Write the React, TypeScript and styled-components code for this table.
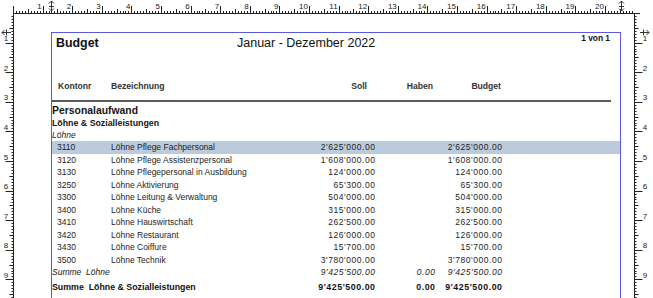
import React from "react";
import styled, { createGlobalStyle } from "styled-components";

const GlobalStyle = createGlobalStyle`
  html, body {
    margin: 0;
    padding: 0;
    background: #ffffff;
  }
  body {
    font-family: "Liberation Sans", Arial, sans-serif;
    color: #1e1e1e;
  }
`;

interface BudgetRow {
  konto: string;
  name: string;
  soll: string;
  budget: string;
}

const rows: BudgetRow[] = [
  { konto: "3110", name: "Löhne Pflege Fachpersonal", soll: "2'625'000.00", budget: "2'625'000.00" },
  { konto: "3120", name: "Löhne Pflege Assistenzpersonal", soll: "1'608'000.00", budget: "1'608'000.00" },
  { konto: "3130", name: "Löhne Pflegepersonal in Ausbildung", soll: "124'000.00", budget: "124'000.00" },
  { konto: "3250", name: "Löhne Aktivierung", soll: "65'300.00", budget: "65'300.00" },
  { konto: "3300", name: "Löhne Leitung & Verwaltung", soll: "504'000.00", budget: "504'000.00" },
  { konto: "3400", name: "Löhne Küche", soll: "315'000.00", budget: "315'000.00" },
  { konto: "3410", name: "Löhne Hauswirtschaft", soll: "262'500.00", budget: "262'500.00" },
  { konto: "3420", name: "Löhne Restaurant", soll: "126'000.00", budget: "126'000.00" },
  { konto: "3430", name: "Löhne Coiffure", soll: "15'700.00", budget: "15'700.00" },
  { konto: "3500", name: "Löhne Technik", soll: "3'780'000.00", budget: "3'780'000.00" },
];

const CM = 29.6;
const MM = CM / 10;

const Frame = styled.div`
  width: 653px;
  height: 298px;
  overflow: hidden;
  display: grid;
  grid-template-columns: 14px 620px 19px;
  grid-template-rows: 14px 284px;
  background: #fff;
`;

const TopRulerCell = styled.div`
  grid-column: 1 / -1;
`;

const Page = styled.div`
  background: #fff;
  padding: 18px 0 0 37px;
  overflow: hidden;
`;

const MarginBox = styled.div`
  width: 568px;
  height: 300px;
  border: 1px solid #5a5ae0;
  border-bottom: none;
`;

const HeaderRow = styled.div`
  height: 44px;
  display: grid;
  grid-template-columns: 185px auto 1fr;
  align-items: start;
`;

const Title = styled.div`
  margin: 2px 0 0 4px;
  font-size: 12.4px;
  line-height: 16px;
  font-weight: bold;
  color: #111;
`;

const Period = styled.div`
  margin-top: 2px;
  font-size: 12.5px;
  line-height: 16px;
  color: #111;
`;

const PageNo = styled.div`
  justify-self: end;
  margin: 0 10px 0 0;
  font-size: 8.4px;
  line-height: 11px;
  font-weight: bold;
  color: #111;
`;

const Cols = styled.div`
  display: grid;
  grid-template-columns: 59px 184px 80px 60px 67px 1fr;
`;

const ColumnHeads = styled(Cols)`
  margin-top: 3px;
  height: 12px;
  font-size: 8.6px;
  line-height: 12px;
  font-weight: bold;
  color: #333;
`;

const Head = styled.div<{ $right?: boolean; $pad?: number }>`
  text-align: ${(p) => (p.$right ? "right" : "left")};
  padding-left: ${(p) => (p.$right ? 0 : p.$pad ?? 0)}px;
  padding-right: ${(p) => (p.$right ? p.$pad ?? 0 : 0)}px;
`;

const Rule = styled.div`
  margin: 8px 9px 0 0;
  height: 2px;
  background: #5b5b5b;
`;

const GroupTitle = styled.div`
  margin-top: 2px;
  font-size: 10.4px;
  line-height: 13px;
  font-weight: bold;
  color: #151515;
`;

const SubTitle = styled.div`
  font-size: 8.8px;
  line-height: 12px;
  font-weight: bold;
  color: #151515;
`;

const Section = styled.div`
  font-size: 8.5px;
  line-height: 12px;
  font-style: italic;
  color: #222;
`;

const Row = styled(Cols)<{ $selected?: boolean }>`
  height: 12.5px;
  font-size: 8.5px;
  line-height: 12.5px;
  color: #1e1e1e;
  background: ${(p) => (p.$selected ? "#bccbdc" : "transparent")};
`;

const Cell = styled.div<{ $pad?: number }>`
  white-space: nowrap;
  padding-left: ${(p) => p.$pad ?? 0}px;
`;

// amounts are drawn a little wider in the report renderer
const Amount = styled.div`
  white-space: nowrap;
  text-align: right;
  letter-spacing: 0.55px;
  margin-right: -0.55px;
`;

const SumRow = styled(Cols)<{ $total?: boolean }>`
  height: 12.5px;
  margin-top: ${(p) => (p.$total ? 2.5 : 0)}px;
  font-size: ${(p) => (p.$total ? 8.8 : 8.5)}px;
  line-height: 12.5px;
  font-style: ${(p) => (p.$total ? "normal" : "italic")};
  font-weight: ${(p) => (p.$total ? "bold" : "normal")};
  color: ${(p) => (p.$total ? "#111" : "#222")};
`;

const SumLabel = styled.div`
  grid-column: 1 / 3;
  white-space: nowrap;
`;

const tickLen = (i: number, long: number) => (i % 10 === 0 ? long : i % 5 === 0 ? 4 : 2);

const TopRuler: React.FC = () => {
  const ticks: React.ReactNode[] = [];
  for (let i = 0; 13 + i * MM <= 634; i++) {
    const x = Math.round(13 + i * MM) + 0.5;
    const len = tickLen(i, 7);
    ticks.push(<line key={i} x1={x} x2={x} y1={13} y2={13 - len} stroke="#222" strokeWidth={1} />);
  }
  const labels = [];
  for (let n = 1; n <= 20; n++) {
    labels.push(
      <text key={n} x={13 + n * CM - 1} y={9} fontSize={8} textAnchor="end" fill="#222" fontFamily="Liberation Sans, Arial, sans-serif">
        {n}
      </text>
    );
  }
  return (
    <svg width={653} height={14} style={{ display: "block" }}>
      <line x1={13} x2={640} y1={13.5} y2={13.5} stroke="#222" />
      {ticks}
      {labels}
      {[51, 621].map((x) => (
        <g key={x} stroke="#333" fill="none" strokeWidth={1}>
          <line x1={x + 0.5} x2={x + 0.5} y1={1} y2={11} />
          <path d={`M${x - 2} ${3.5}L${x + 0.5} 1L${x + 3} ${3.5}`} />
          <path d={`M${x - 2} ${8.5}L${x + 0.5} 11L${x + 3} ${8.5}`} />
          <line x1={x - 2} x2={x + 3} y1={6.5} y2={6.5} />
        </g>
      ))}
    </svg>
  );
};

const SideRuler: React.FC<{ side: "left" | "right" }> = ({ side }) => {
  const w = side === "left" ? 14 : 19;
  const base = side === "left" ? 13.5 : 0.5;
  const dir = side === "left" ? -1 : 1;
  const ticks: React.ReactNode[] = [];
  for (let i = 0; -1 + i * MM <= 284; i++) {
    const y = Math.round(-1 + i * MM) + 0.5;
    const len = tickLen(i, 8);
    ticks.push(<line key={i} x1={base} x2={base + dir * len} y1={y} y2={y} stroke="#222" />);
  }
  const labels = [];
  for (let n = 1; n <= 9; n++) {
    labels.push(
      <text
        key={n}
        x={side === "left" ? 6 : 11}
        y={-1 + n * CM - 1.5}
        fontSize={8}
        textAnchor="middle"
        fill="#222"
        fontFamily="Liberation Sans, Arial, sans-serif"
      >
        {n}
      </text>
    );
  }
  const my = 18.5;
  return (
    <svg width={w} height={284} style={{ display: "block" }}>
      <line x1={base} x2={base} y1={0} y2={284} stroke="#222" />
      {ticks}
      {labels}
      <g stroke="#333" fill="none">
        <line x1={side === "left" ? 2 : 6} x2={side === "left" ? 11 : 15} y1={my} y2={my} />
        <path d={side === "left" ? `M4.5 ${my - 2.5}L2 ${my}L4.5 ${my + 2.5}` : `M12.5 ${my - 2.5}L15 ${my}L12.5 ${my + 2.5}`} />
        <line x1={side === "left" ? 6.5 : 9.5} x2={side === "left" ? 6.5 : 9.5} y1={my - 3} y2={my + 3} />
      </g>
    </svg>
  );
};

const App: React.FC = () => {
  return (
    <>
      <GlobalStyle />
      <Frame>
        <TopRulerCell>
          <TopRuler />
        </TopRulerCell>
        <SideRuler side="left" />
        <Page>
          <MarginBox>
            <HeaderRow>
              <Title>Budget</Title>
              <Period>Januar - Dezember 2022</Period>
              <PageNo>1 von 1</PageNo>
            </HeaderRow>
            <ColumnHeads>
              <Head $pad={6}>Kontonr</Head>
              <Head $pad={0}>Bezeichnung</Head>
              <Head $right $pad={8}>Soll</Head>
              <Head $right $pad={2}>Haben</Head>
              <Head $right $pad={1}>Budget</Head>
            </ColumnHeads>
            <Rule />
            <GroupTitle>Personalaufwand</GroupTitle>
            <SubTitle>Löhne &amp; Sozialleistungen</SubTitle>
            <Section>Löhne</Section>
            {rows.map((r, i) => (
              <Row key={r.konto} $selected={i === 0}>
                <Cell $pad={5}>{r.konto}</Cell>
                <Cell>{r.name}</Cell>
                <Amount>{r.soll}</Amount>
                <Amount></Amount>
                <Amount>{r.budget}</Amount>
              </Row>
            ))}
            <SumRow>
              <SumLabel>Summe&nbsp; Löhne</SumLabel>
              <Amount>9'425'500.00</Amount>
              <Amount>0.00</Amount>
              <Amount>9'425'500.00</Amount>
            </SumRow>
            <SumRow $total>
              <SumLabel>Summe&nbsp; Löhne &amp; Sozialleistungen</SumLabel>
              <Amount>9'425'500.00</Amount>
              <Amount>0.00</Amount>
              <Amount>9'425'500.00</Amount>
            </SumRow>
          </MarginBox>
        </Page>
        <SideRuler side="right" />
      </Frame>
    </>
  );
};

export default App;
